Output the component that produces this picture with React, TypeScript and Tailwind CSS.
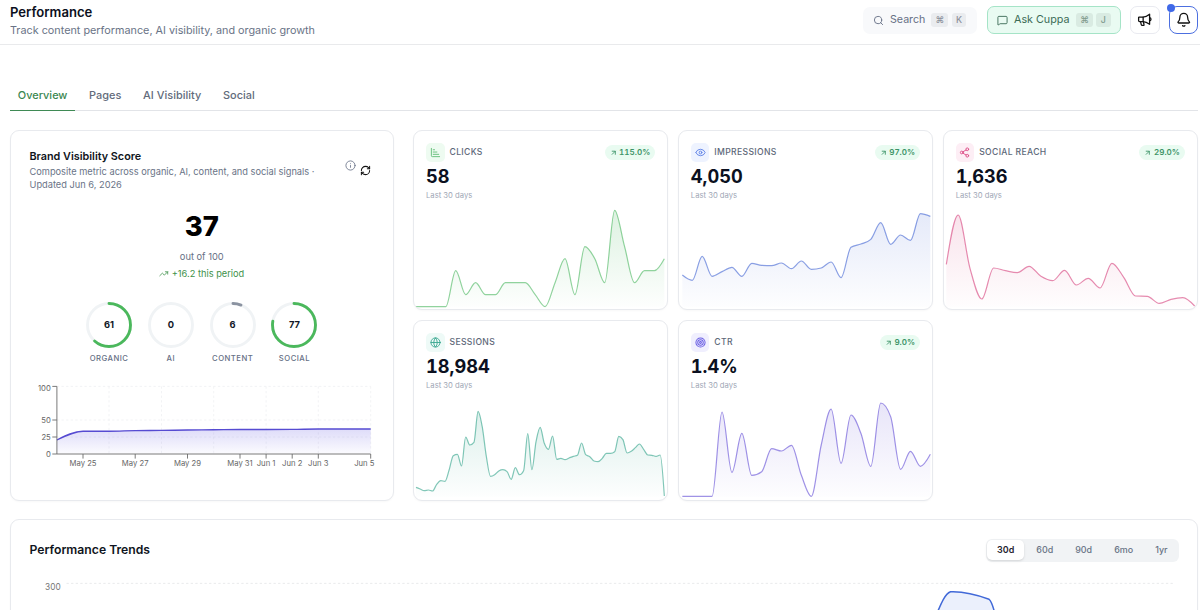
import type { ReactNode } from "react";
import { ArrowUpRight, Bell, ChartBarIncreasing, Eye, Globe, Info, MessageSquare, RefreshCw, Search, Share2, TrendingUp } from "lucide-react";

type Point = [number, number];

/** Monotone cubic interpolation through the given points. */
function monotone(points: Point[]): string {
  const n = points.length;
  const slope = (a: Point, b: Point) => (b[1] - a[1]) / (b[0] - a[0]);
  const m: number[] = new Array(n).fill(0);
  for (let i = 1; i < n - 1; i++) {
    const h0 = points[i][0] - points[i - 1][0];
    const h1 = points[i + 1][0] - points[i][0];
    const s0 = slope(points[i - 1], points[i]);
    const s1 = slope(points[i], points[i + 1]);
    const p = (s0 * h1 + s1 * h0) / (h0 + h1);
    m[i] = (Math.sign(s0) + Math.sign(s1)) * Math.min(Math.abs(s0), Math.abs(s1), 0.5 * Math.abs(p)) || 0;
  }
  m[0] = (3 * slope(points[0], points[1]) - m[1]) / 2;
  m[n - 1] = (3 * slope(points[n - 2], points[n - 1]) - m[n - 2]) / 2;
  let d = `M${points[0][0]},${points[0][1]}`;
  for (let i = 1; i < n; i++) {
    const [x0, y0] = points[i - 1];
    const [x1, y1] = points[i];
    const k = (x1 - x0) / 3;
    d += `C${x0 + k},${y0 + k * m[i - 1]} ${x1 - k},${y1 - k * m[i]} ${x1},${y1}`;
  }
  return d;
}

function Sparkline({ id, values, x0, x1, box, base, color, opacity }: {
  id: string; values: number[]; x0: number; x1: number; box: string; base: number; color: string; opacity: number;
}) {
  const step = (x1 - x0) / (values.length - 1);
  const line = monotone(values.map((v, i): Point => [x0 + i * step, v]));
  return (
    <svg viewBox={box} className="mt-auto block h-[105px] w-full shrink-0" preserveAspectRatio="none">
      <defs>
        <linearGradient id={id} x1="0" y1="0" x2="0" y2="1">
          <stop offset="0" stopColor={color} stopOpacity={opacity} />
          <stop offset="1" stopColor={color} stopOpacity="0.01" />
        </linearGradient>
      </defs>
      <path d={`${line}L${x1},${base}L${x0},${base}Z`} fill={`url(#${id})`} />
      <path d={line} fill="none" stroke={color} strokeOpacity="0.62" strokeWidth="3.6" />
    </svg>
  );
}

function Target() {
  return (
    <svg viewBox="0 0 24 24" className="size-[11px]" fill="none" stroke="currentColor" strokeWidth="2.2">
      <circle cx="12" cy="12" r="10" />
      <circle cx="12" cy="12" r="6" />
      <circle cx="12" cy="12" r="2" />
    </svg>
  );
}

function Kpi({ icon, tile, label, value, delta, children }: {
  icon: ReactNode; tile: string; label: string; value: string; delta?: string; children: ReactNode;
}) {
  return (
    <div className="flex min-w-0 flex-col overflow-hidden rounded-[9px] border border-[#e8eaee] bg-white shadow-[0_1px_2px_rgba(0,0,0,0.03)]">
      <div className="flex items-center px-3 pt-3">
        <span className={`flex size-[18.5px] items-center justify-center rounded-[5px] ${tile}`}>{icon}</span>
        <span className="ml-[5px] text-[8.6px] font-medium tracking-[0.04em] text-[#5d6778]">{label}</span>
        {delta && (
          <span className="ml-auto flex h-[15.5px] items-center gap-[2px] rounded-full bg-[#e9fbf1] px-[5px] text-[8.1px] font-semibold text-[#3d9468] tabular-nums">
            <ArrowUpRight className="size-[7.5px]" strokeWidth={2.8} />
            {delta}
          </span>
        )}
      </div>
      <div className="mt-[2px] pl-3 text-[18.2px] leading-[25px] font-bold text-[#0b1020] tabular-nums">{value}</div>
      <div className="mt-[1px] pl-3 text-[7.66px] leading-[11px] text-[#a0a7b6]">Last 30 days</div>
      {children}
    </div>
  );
}

function Ring({ value, label, color }: { value: number; label: string; color: string }) {
  const c = 2 * Math.PI * 21.6;
  return (
    <div className="flex w-[46px] flex-col items-center">
      <div className="grid size-[46px] place-items-center">
        <svg viewBox="0 0 46 46" className="col-start-1 row-start-1 size-[46px] -rotate-90" fill="none" strokeWidth="2.9">
          <circle cx="23" cy="23" r="21.5" stroke="#f0f3f5" />
          {value > 0 && <circle cx="23" cy="23" r="21.5" stroke={color} strokeLinecap="round" strokeDasharray={`${(c * value) / 100} ${c}`} />}
        </svg>
        <span className="col-start-1 row-start-1 text-[9.3px] font-bold text-[#111827]">{value}</span>
      </div>
      <span className="mt-[5px] text-[7.7px] leading-[12px] font-medium tracking-[0.06em] whitespace-nowrap text-[#667085]">{label}</span>
    </div>
  );
}

const scoreLine: Point[] = [[56.4, 440], [82.5, 431.2], [108.5, 431.2], [134.7, 430.6], [161, 430.4], [187, 430], [213, 429.8], [239.3, 429.5], [265.5, 429.5], [291.7, 429.4], [317.7, 429], [370.2, 429]];

function ScoreChart() {
  const line = monotone(scoreLine);
  const dates: [number, string][] = [[82.5, "May 25"], [134.7, "May 27"], [187, "May 29"], [239.5, "May 31"], [265.6, "Jun 1"], [291.7, "Jun 2"], [317.8, "Jun 3"], [370.2, "Jun 5"]];
  const marks: [number, number][] = [[386.4, 100], [420, 50], [437, 25], [454, 0]];
  return (
    <svg viewBox="29.5 380 345.5 92" className="mt-[15px] block h-[92px] w-[345.5px]" fill="none">
      <defs>
        <linearGradient id="score" x1="0" y1="0" x2="0" y2="1">
          <stop offset="0" stopColor="#5b4fe0" stopOpacity="0.2" />
          <stop offset="1" stopColor="#5b4fe0" stopOpacity="0.02" />
        </linearGradient>
      </defs>
      <g stroke="#eff0f2" strokeWidth="0.8" strokeDasharray="2.3 2.3">
        {[386.4, 420, 437].map((y) => <path key={y} d={`M56.4 ${y}H370.2`} />)}
        {[108.5, 161, 213.2, 265.6, 317.8, 370.2].map((x) => <path key={x} d={`M${x} 386.4V454`} />)}
      </g>
      <path d={`${line}L370.2,454L56.4,454Z`} fill="url(#score)" />
      <path d={line} stroke="#564bd2" strokeWidth="1.4" />
      <g stroke="#6b6b6b" strokeWidth="0.9">
        <path d="M56.4 386.4V454M56.4 454H370.2" />
        {marks.map(([y]) => <path key={y} d={`M51.8 ${y}H56.4`} />)}
        {dates.map(([x]) => <path key={x} d={`M${x} 454V458.6`} />)}
      </g>
      <g className="font-[Inter] text-[7.7px]" fill="#666">
        {marks.map(([y, t]) => <text key={t} x="50.3" y={t === 100 ? y + 4.5 : y + 2.8} textAnchor="end">{t}</text>)}
        {dates.map(([x, t]) => <text key={t} x={t === "Jun 5" ? 374 : x} y="465.8" textAnchor={t === "Jun 5" ? "end" : "middle"}>{t}</text>)}
      </g>
    </svg>
  );
}

function Key({ children, className }: { children: ReactNode; className: string }) {
  return <kbd className={`flex h-[14px] items-center justify-center rounded-[3px] font-[Inter] text-[8.8px] font-medium ${className}`}>{children}</kbd>;
}

function Megaphone() {
  return (
    <svg viewBox="0 0 24 24" className="size-[15.5px]" fill="none" stroke="#111" strokeWidth="2" strokeLinejoin="round" strokeLinecap="round">
      <path d="M2.5 8.5 Q2.5 7.8 3.3 7.8 H9.5 C13 7.8 16 6.3 19.5 3.5 V19 C16 16.3 13 14.8 9.5 14.8 H4 C3 14.8 2.5 14 2.5 13Z" />
      <path d="M9.5 7.8V14.8M5.5 15 6.6 19.6C6.8 20.5 7.4 20.8 8.2 20.8H9.8C10.8 20.8 11.2 20 10.8 19L9.8 15.4M19.5 8.8C22.4 9.2 22.4 13.3 19.5 13.7" />
    </svg>
  );
}

const clicks = [545, 545, 545, 545, 437, 509, 473, 509, 509, 473, 473, 473, 509, 545, 473, 401, 509, 365, 401, 473, 256, 365, 473, 437, 437, 401];
const impressions = [450, 466, 394, 454, 440, 427, 454, 415, 421, 422, 414, 431, 408, 433, 429, 411, 458, 367, 357, 343, 293, 358, 330, 346, 266, 274];
const reach = [418, 270, 430, 522, 429, 437, 443, 424, 454, 467, 436, 480, 460, 489, 415, 457, 513, 514, 535, 523, 518, 543];
const sessions = [517, 522, 527, 525, 528, 508, 497, 499, 465, 422, 418, 453, 366, 390, 382, 289, 335, 425, 484, 479, 468, 464, 470, 493, 458, 479, 467, 356, 464, 380, 337, 385, 403, 363, 433, 430, 434, 429, 424, 421, 384, 419, 425, 438, 440, 430, 415, 415, 410, 364, 374, 414, 409, 398, 387, 403, 420, 421, 424, 420, 543];
const ctr = [544, 544, 544, 544, 291, 472, 355, 481, 470, 401, 408, 391, 481, 544, 390, 282, 445, 300, 355, 454, 264, 305, 463, 409, 454, 418];

export default function App() {
  return (
    <div className="h-[610px] w-[1200px] overflow-hidden bg-white font-['Inter',sans-serif] text-[#111827]">
      <header className="flex h-[45px] items-start justify-between border-b border-[#e9eaec] pr-[2px] pl-[10px]">
        <div className="pt-1">
          <h1 className="text-[13.1px] leading-[17px] font-semibold text-[#0b1020]">Performance</h1>
          <p className="mt-[2px] text-[10.82px] leading-4 text-[#697386]">Track content performance, AI visibility, and organic growth</p>
        </div>
        <div className="flex items-center pt-[6px]">
          <button className="flex h-[27px] w-[114.5px] items-center rounded-[7px] bg-[#f8f9fb] pl-[10.5px] text-[10.65px] text-[#667085]">
            <Search className="size-[11px]" strokeWidth={2} />
            <span className="ml-[6px]">Search</span>
            <Key className="ml-[6px] w-[17px] bg-[#eaecef] text-[#8a909b]">⌘</Key>
            <Key className="ml-[3.5px] w-[14.5px] bg-[#eaecef] text-[#8a909b]">K</Key>
          </button>
          <button className="ml-[9.5px] flex h-[28px] w-[134px] items-center rounded-[7px] border border-[#a5e4c7] bg-[#e9fbf2] pl-[9.5px] text-[10.75px] text-[#3c6b56]">
            <MessageSquare className="size-[11px]" strokeWidth={2} />
            <span className="ml-[6px]">Ask Cuppa</span>
            <Key className="ml-[6.5px] w-[17px] bg-[#d9ebe2] text-[#7f9a8d]">⌘</Key>
            <Key className="ml-[3px] w-[14.5px] bg-[#d9ebe2] text-[#7f9a8d]">J</Key>
          </button>
          <button className="ml-[9.5px] flex h-[28px] w-[29.5px] items-center justify-center rounded-[7px] border border-[#e9eaf0] bg-white">
            <Megaphone />
          </button>
          <button className="relative ml-[9px] flex h-[28px] w-[29.5px] items-center justify-center rounded-[8px] border border-[#4c6fe0] bg-white text-[#111]">
            <Bell className="size-[15.5px]" strokeWidth={2} />
            <span className="absolute -top-[3px] -left-[3px] size-2 rounded-full bg-[#4069e8]" />
          </button>
        </div>
      </header>

      <div className="pr-[2px] pl-[10px]">
        <nav className="mt-[34.5px] flex gap-[5.8px] border-b border-[#e2e4e8] text-[10.95px] font-medium text-[#626b7b]">
          <a className="-mb-px h-[31px] border-b border-[#3f8a55] px-[7.8px] pt-[7.5px] leading-4 text-[#3b8750]">Overview</a>
          <a className="px-[8px] pt-[7.5px] leading-4">Pages</a>
          <a className="px-[8px] pt-[7.5px] leading-4">AI Visibility</a>
          <a className="px-[8px] pt-[7.5px] leading-4">Social</a>
        </nav>

        <main className="mt-[19.5px] flex gap-[19.5px]">
          <section className="h-[371px] w-[383.5px] shrink-0 rounded-[9px] border border-[#e8eaee] bg-white px-[18.5px] pt-[18px] shadow-[0_1px_2px_rgba(0,0,0,0.03)]">
            <div className="flex justify-between">
              <div className="w-[300px]">
                <h2 className="text-[10.8px] leading-[15.5px] font-semibold text-[#0f1420]">Brand Visibility Score</h2>
                <p className="text-[9.25px] leading-[13.5px] text-[#697386]">
                  <span className="whitespace-nowrap">Composite metric across organic, AI, content, and social signals ·</span>
                  <br />
                  Updated Jun 6, 2026
                </p>
              </div>
              <div className="mr-[2.7px] flex items-start gap-[4px] pt-[11px]">
                <Info className="size-[11px] text-[#667085]" strokeWidth={1.8} />
                <RefreshCw className="mt-[5px] size-[11px] text-[#111]" strokeWidth={2.2} />
              </div>
            </div>
            <div className="mt-[20px] flex flex-col items-center">
              <div className="text-[27.4px] leading-[28px] font-extrabold text-black">37</div>
              <div className="mt-[10px] text-[9.3px] leading-[14px] text-[#667085]">out of 100</div>
              <div className="mt-[3.5px] flex items-center gap-[3px] text-[9.25px] leading-[14px] text-[#3d9149]">
                <TrendingUp className="size-[9.5px]" strokeWidth={2} />
                +16.2 this period
              </div>
            </div>
            <div className="mt-[21px] flex justify-center gap-[15.8px]">
              <Ring value={61} label="ORGANIC" color="#4bb85c" />
              <Ring value={0} label="AI" color="#8b93a1" />
              <Ring value={6} label="CONTENT" color="#8b93a1" />
              <Ring value={77} label="SOCIAL" color="#4bb85c" />
            </div>
            <ScoreChart />
          </section>

          <section className="grid h-[371px] min-w-0 flex-1 grid-cols-3 grid-rows-[180px_181px] gap-x-[9.5px] gap-y-[10px]">
            <Kpi icon={<ChartBarIncreasing className="size-[11px]" />} tile="bg-[#eefbf1] text-[#62bd78]" label="CLICKS" value="58" delta="115.0%">
              <Sparkline id="clicks" values={clicks} x0={33} x1={778} box="27 237 760 315" base={545} color="#4db862" opacity={0.19} />
            </Kpi>
            <Kpi icon={<Eye className="size-[11px]" />} tile="bg-[#eef3ff] text-[#5b7fe6]" label="IMPRESSIONS" value="4,050" delta="97.0%">
              <Sparkline id="impressions" values={impressions} x0={30} x1={774} box="20 237 760 315" base={545} color="#4668d4" opacity={0.14} />
            </Kpi>
            <Kpi icon={<Share2 className="size-[11px]" />} tile="bg-[#fdeef5] text-[#dc4c86]" label="SOCIAL REACH" value="1,636" delta="29.0%">
              <Sparkline id="reach" values={reach} x0={25} x1={770} box="18 237 760 315" base={545} color="#d6457f" opacity={0.15} />
            </Kpi>
            <Kpi icon={<Globe className="size-[11px]" />} tile="bg-[#eefaf7] text-[#3aa790]" label="SESSIONS" value="18,984">
              <Sparkline id="sessions" values={sessions} x0={33} x1={778} box="27 240 760 315" base={545} color="#35a58c" opacity={0.17} />
            </Kpi>
            <Kpi icon={<Target />} tile="bg-[#f0effe] text-[#6a5fe3]" label="CTR" value="1.4%" delta="9.0%">
              <Sparkline id="ctr" values={ctr} x0={30} x1={774} box="20 240 760 315" base={545} color="#6651d6" opacity={0.15} />
            </Kpi>
          </section>
        </main>

        <section className="mt-[18px] h-[300px] rounded-[9px] border border-[#e8eaee] bg-white pt-[18.5px] shadow-[0_1px_2px_rgba(0,0,0,0.03)]">
          <div className="flex items-center justify-between pr-[18px] pl-[18.5px]">
            <h2 className="text-[12.2px] leading-[16px] font-semibold text-[#0f1420]">Performance Trends</h2>
            <div className="flex h-[23px] items-center gap-[2px] rounded-[6px] bg-[#f1f3f5] px-[1.5px] text-[8.95px] font-medium text-[#697386]">
              <button className="h-5 rounded-[5px] bg-white px-[10px] font-semibold text-[#1f2430] shadow-sm">30d</button>
              <button className="h-5 px-[10px]">60d</button>
              <button className="h-5 px-[10px]">90d</button>
              <button className="h-5 px-[10px]">6mo</button>
              <button className="h-5 px-[10px]">1yr</button>
            </div>
          </div>
          <svg viewBox="29.5 570 1148 60" className="mt-[8.5px] ml-[18.5px] block h-[60px] w-[1148px]" fill="none">
            <text x="60.2" y="590.4" textAnchor="end" fill="#777" className="font-[Inter] text-[8.3px]">300</text>
            <path d="M66 583.4H1173.5" stroke="#e7e8ea" strokeWidth="0.9" strokeDasharray="2.3 2.3" />
            <path d="M932 624C939 608 943 594.5 950 591.7C962 591.2 976 594.5 988.5 599.2C993 603 994 614 997 624Z" fill="#ebf0fc" />
            <path d="M932 624C939 608 943 594.5 950 591.7C962 591.2 976 594.5 988.5 599.2C993 603 994 614 997 624" stroke="#4169d8" strokeWidth="1.5" />
          </svg>
        </section>
      </div>
    </div>
  );
}
